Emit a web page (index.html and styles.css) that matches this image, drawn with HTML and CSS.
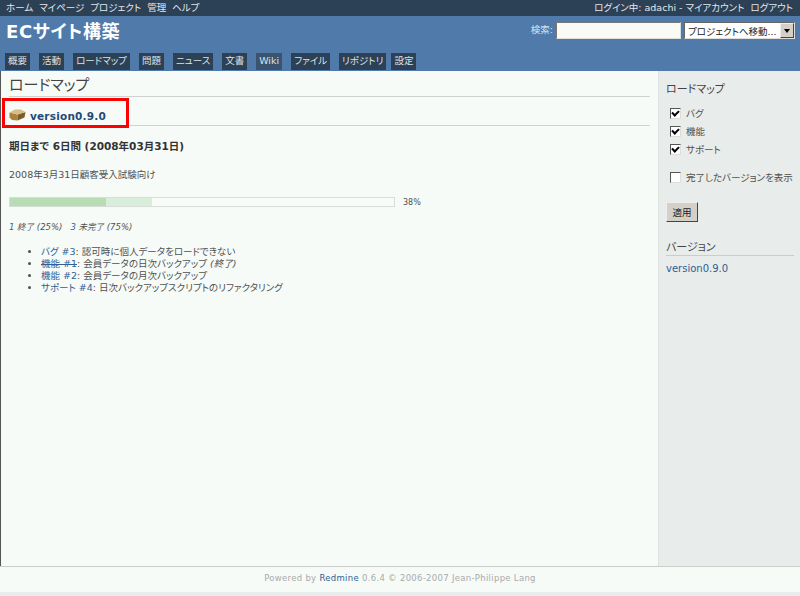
FILE: index.html
```html
<!DOCTYPE HTML>
<html lang="ja">
  <head>
    <meta charset="utf-8">
    <title>ロードマップ</title>
    <link rel="stylesheet" href="styles.css">
  </head>
<body>
  <div id="top-menu">
    <ul>
      <li>ホーム</li>
      <li>マイページ</li>
      <li>プロジェクト</li>
      <li>管理</li>
      <li>ヘルプ</li>
    </ul>
    <div id="account">ログイン中: adachi - マイアカウント&nbsp; ログアウト</div>
  </div>
  <div id="header">
    <div id="title-row">
      <h1>ECサイト構築</h1>
      <div id="quick-search">
        <label>検索:</label>
        <input type="text" class="search-box">
        <div class="jump-box"><span>プロジェクトへ移動...</span><i class="arrow"></i></div>
      </div>
    </div>
    <ul id="main-menu">
      <li>概要</li>
      <li>活動</li>
      <li>ロードマップ</li>
      <li>問題</li>
      <li>ニュース</li>
      <li>文書</li>
      <li class="latin">Wiki</li>
      <li>ファイル</li>
      <li>リポジトリ</li>
      <li class="last">設定</li>
    </ul>
  </div>
  <div id="main">
    <div id="content">
      <h2>ロードマップ</h2>
      <div class="version-head">
        <svg class="package" width="17" height="12" viewBox="0 0 17 12">
          <path d="M0.500 3.500 L8.500 5.500 L8.500 11.500 L3 11 L0.500 8.500 Z" fill="#a9823f"/>
          <path d="M8.500 5.500 L16.500 3 L15.500 8.500 L8.500 11.500 Z" fill="#7c5c2a"/>
          <path d="M0.500 3.500 L6 0.500 L12 0.500 L16.500 3 L8.500 5.500 Z" fill="#d9bd85"/>
        </svg>
        <a href="#">version0.9.0</a>
      </div>
      <p class="due"><strong>期日まで 6日間 (2008年03月31日)</strong></p>
      <p class="desc">2008年3月31日顧客受入試験向け</p>
      <div class="progress-row">
        <div class="progress">
          <div class="closed" style="width:25%"></div>
          <div class="done" style="width:12%"></div>
        </div>
        <span class="pct">38%</span>
      </div>
      <p class="counts"><a href="#">1</a> 終了 (25%) &nbsp; <a href="#">3</a> 未完了 (75%)</p>
      <ul class="issues">
        <li><a href="#">バグ #3</a>: 認可時に個人データをロードできない</li>
        <li><a href="#" class="struck">機能 #1</a>: 会員データの日次バックアップ <em>(終了)</em></li>
        <li><a href="#">機能 #2</a>: 会員データの月次バックアップ</li>
        <li><a href="#">サポート #4</a>: 日次バックアップスクリプトのリファクタリング</li>
      </ul>
      <div class="highlight"></div>
    </div>
    <div id="sidebar">
      <h3>ロードマップ</h3>
      <ul class="filters">
        <li><i class="check on"></i>バグ</li>
        <li><i class="check on"></i>機能</li>
        <li><i class="check on"></i>サポート</li>
      </ul>
      <div class="completed"><i class="check"></i>完了したバージョンを表示</div>
      <button>適用</button>
      <h3 class="versions">バージョン</h3>
      <a href="#">version0.9.0</a>
    </div>
  </div>
  <div id="footer">Powered by <a href="#">Redmine</a> 0.6.4 © 2006-2007 Jean-Philippe Lang</div>
  <div id="bottom"></div>
</body>
</html>
```

FILE: styles.css
```css
html, body {
  margin: 0;
  padding: 0;
  height: 596px;
  overflow: hidden;
}
body {
  display: flex;
  flex-direction: column;
  font-family: "DejaVu Sans", "Noto Sans CJK JP", sans-serif;
  font-feature-settings: "palt";
  font-size: 9.5px;
  color: #505050;
  background: #f6fbf8;
}
a {
  color: #2f6096;
  text-decoration: none;
}
ul {
  list-style: none;
  margin: 0;
  padding: 0;
}

#top-menu {
  height: 16px;
  background: #2c4056;
  color: #e4e8ec;
  display: flex;
  justify-content: space-between;
  align-items: center;
  padding: 0 7px 0 6px;
  line-height: 16px;
}
#top-menu ul {
  display: flex;
  gap: 6px;
}

#header {
  height: 55px;
  box-sizing: border-box;
  background: #507aaa;
  color: #fff;
  display: flex;
  flex-direction: column;
  justify-content: space-between;
}
#title-row {
  display: flex;
  justify-content: space-between;
  padding: 3px 5px 0 6px;
}
h1 {
  margin: 0;
  font-size: 18px;
  line-height: 26px;
  font-weight: bold;
  letter-spacing: 0.6px;
}
#quick-search {
  display: flex;
  align-items: flex-start;
  gap: 3px;
  padding-top: 3px;
  color: #d8e2ee;
  height: 18px;
}
#quick-search label {
  line-height: 15px;
}
.search-box {
  width: 125px;
  height: 17px;
  box-sizing: border-box;
  margin: 0;
  padding: 0;
  background: #fbfbf6;
  border: 1px solid;
  border-color: #777 #ddd #ddd #777;
}
.jump-box {
  width: 111px;
  height: 17px;
  box-sizing: border-box;
  background: #fff;
  border: 1px solid;
  border-color: #666 #ddd #ddd #666;
  color: #222;
  display: flex;
  justify-content: space-between;
  align-items: center;
  padding-left: 3px;
  white-space: nowrap;
}
.arrow {
  width: 12px;
  height: 13px;
  flex: none;
  background: #d4d0c8;
  border: 1px solid;
  border-color: #eee #444 #444 #eee;
  position: relative;
}
.arrow::after {
  content: "";
  position: absolute;
  left: 3px;
  top: 5px;
  border: 3px solid transparent;
  border-top: 4px solid #000;
  border-bottom: 0;
}
#main-menu {
  display: flex;
  gap: 9px;
  padding: 0 0 1px 5px;
}
#main-menu li {
  height: 17px;
  line-height: 16px;
  padding: 0 3px;
  background: #2c4056;
  color: #dde3ea;
}
#main-menu li.latin {
  background: #3a5470;
}
#main-menu li.last {
  margin-left: -4px;
}

#main {
  flex: 1;
  display: flex;
  min-height: 0;
  border-left: 1px solid #555;
}
#content {
  flex: 1;
  position: relative;
  padding: 0 8px 0 8px;
  background: #f6fbf8;
}
h2 {
  margin: 0;
  padding: 4px 0 1px 0;
  height: 20px;
  font-size: 15px;
  font-weight: normal;
  line-height: 20px;
  color: #444;
  border-bottom: 1px solid #d0d4d0;
}
.version-head {
  display: flex;
  align-items: flex-end;
  gap: 4px;
  height: 28px;
  border-bottom: 1px solid #d0d4d0;
  font-size: 10.500px;
  font-weight: bold;
}
.version-head a {
  color: #1f4a7a;
  line-height: 18px;
  letter-spacing: 0.2px;
}
.package {
  flex: none;
  margin-bottom: 4px;
}
.due {
  margin: 13px 0 0;
  font-size: 10.500px;
  line-height: 14px;
  color: #333;
}
.desc {
  margin: 15px 0 0;
  line-height: 14px;
}
.progress-row {
  display: flex;
  align-items: center;
  gap: 8px;
  margin-top: 15px;
}
.progress {
  width: 384px;
  height: 8px;
  display: flex;
  border: 1px solid #d8dcd8;
  background: #f8fcf9;
}
.closed {
  background: #b8dcb4;
}
.done {
  background: #d8eedb;
}
.pct {
  font-size: 8px;
}
.counts {
  margin: 14px 0 0;
  font-size: 8.500px;
  font-style: italic;
  line-height: 12px;
}
.issues {
  list-style: disc;
  margin-top: 13px;
  padding-left: 32px;
  line-height: 12px;
}
.struck {
  text-decoration: line-through;
}
.highlight {
  position: absolute;
  left: 1px;
  top: 27px;
  width: 121px;
  height: 24px;
  border: 3px solid #f00;
}

#sidebar {
  width: 128px;
  flex: none;
  padding: 10px 6px 0 7px;
  background: #e8ecea;
  border-left: 1px solid #dfe3e1;
}
h3 {
  margin: 0;
  font-size: 11px;
  font-weight: normal;
  line-height: 18px;
  color: #444;
}
.filters {
  margin-top: 5px;
  padding-left: 4px;
}
.filters li {
  display: flex;
  align-items: center;
  height: 18px;
}
.completed {
  display: flex;
  align-items: center;
  height: 18px;
  margin-top: 10px;
  padding-left: 4px;
  white-space: nowrap;
}
.check {
  display: inline-block;
  width: 9px;
  height: 9px;
  margin-right: 5px;
  flex: none;
  position: relative;
  background: #fff;
  border: 1px solid;
  border-color: #555 #ddd #ddd #555;
}
.check.on::after {
  content: "";
  position: absolute;
  left: 2px;
  top: 0;
  width: 3px;
  height: 5px;
  border: solid #000;
  border-width: 0 2px 2px 0;
  transform: rotate(45deg);
}
button {
  display: block;
  width: 32px;
  height: 20px;
  margin: 16px 0 0;
  padding: 0;
  font: inherit;
  font-feature-settings: inherit;
  color: #222;
  background: #d4d0c8;
  border: 1px solid;
  border-color: #eee #444 #444 #eee;
}
h3.versions {
  margin-top: 19px;
  margin-bottom: 7px;
  line-height: 14px;
  border-bottom: 1px solid #ccc;
}
#sidebar > a {
  font-size: 10px;
}

#footer {
  height: 25px;
  line-height: 22px;
  border-top: 1px solid #ccc;
  text-align: center;
  font-size: 8.500px;
  color: #aaa;
  background: #f6fbf8;
  letter-spacing: 0.3px;
}
#bottom {
  height: 4px;
  background: #e8ecea;
}
```
